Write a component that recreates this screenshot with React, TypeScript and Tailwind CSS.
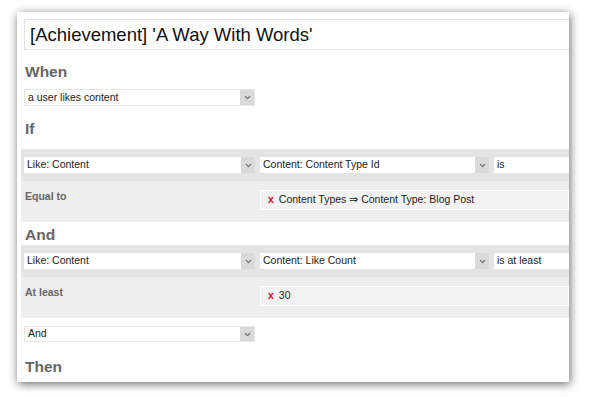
import { ChevronDown } from "lucide-react";

const font = { fontFamily: '"Liberation Sans", Arial, sans-serif' };

function Select({ label, className = "" }: { label: string; className?: string }) {
  return (
    <div className={`flex h-[16px] items-stretch bg-white text-[10.5px] text-[#222] ${className}`}>
      <div className="flex flex-1 items-center overflow-hidden whitespace-nowrap pl-[3px]">{label}</div>
      <div className="flex w-[14px] items-center justify-center bg-[#d9d9d9]">
        <ChevronDown size={9} strokeWidth={3} className="text-[#666]" />
      </div>
    </div>
  );
}

function Heading({ children, className = "" }: { children: React.ReactNode; className?: string }) {
  return <div className={`pl-[4px] text-[15.5px] font-bold leading-[18px] text-[#666] ${className}`}>{children}</div>;
}

function Tag({ children }: { children: React.ReactNode }) {
  return (
    <div className="flex h-[20px] flex-1 items-center border border-white bg-[#f2f2f2] pl-[7px] text-[10.5px] text-[#222]">
      <span className="mr-[5px] font-bold text-[#d11]">x</span>
      <span className="whitespace-nowrap">{children}</span>
    </div>
  );
}

function ConditionRow({ a, b, c, label, value }: { a: string; b: string; c: string; label: string; value: string }) {
  return (
    <div>
      <div className="flex h-[32px] items-center gap-[5px] bg-[#e4e4e4] pl-[3px]">
        <Select label={a} className="w-[231px]" />
        <Select label={b} className="w-[229px]" />
        <div className="flex h-[16px] flex-1 items-center bg-white pl-[3px] text-[10.5px] text-[#222]">{c}</div>
      </div>
      <div className="flex h-[41px] bg-[#eeeeee] pl-[4px]">
        <div className="w-[235px] pt-[8px] text-[10.5px] font-bold text-[#666]">{label}</div>
        <div className="flex flex-1 pt-[9px]">
          <Tag>{value}</Tag>
        </div>
      </div>
    </div>
  );
}

export default function App() {
  return (
    <div className="h-[397px] w-[590px] bg-white pt-[12px] pl-[17px]" style={font}>
      <div className="flex h-[370px] w-[552px] flex-col overflow-hidden bg-white pl-[4px] shadow-[1px_2px_9px_rgba(0,0,0,0.6)]">
        <div className="mt-[7px] ml-[3px] flex h-[31px] items-center border border-r-0 border-[#e2e2e2] pl-[5px] text-[18.5px] text-[#111]">
          [Achievement] 'A Way With Words'
        </div>
        <Heading className="mt-[13px]">When</Heading>
        <div className="mt-[8px] ml-[3px]">
          <Select label="a user likes content" className="h-[17px] w-[231px] border border-[#e6e6e6]" />
        </div>
        <Heading className="mt-[14px]">If</Heading>
        <div className="mt-[11px]">
          <ConditionRow
            a="Like: Content"
            b="Content: Content Type Id"
            c="is"
            label="Equal to"
            value="Content Types ⇒ Content Type: Blog Post"
          />
        </div>
        <Heading className="mt-[4px]">And</Heading>
        <div className="mt-[1px]">
          <ConditionRow a="Like: Content" b="Content: Like Count" c="is at least" label="At least" value="30" />
        </div>
        <div className="mt-[8px] ml-[3px]">
          <Select label="And" className="w-[231px] border border-[#e6e6e6]" />
        </div>
        <Heading className="mt-[16px]">Then</Heading>
      </div>
    </div>
  );
}
